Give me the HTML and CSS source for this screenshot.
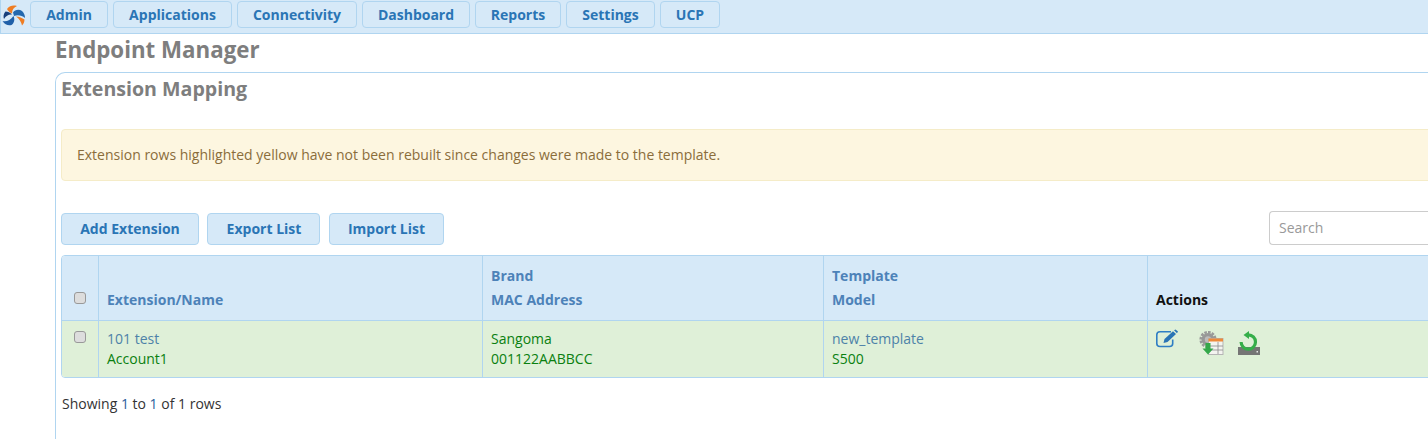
FILE: index.html
```html
<!DOCTYPE html>
<html lang="en">
<head>
<meta charset="utf-8">
<title>Endpoint Manager</title>
<link rel="stylesheet" href="styles.css">
</head>
<body>
<header class="topbar">
  <svg class="logo" viewBox="0 0 24 24" width="24" height="24" aria-hidden="true">
    <path d="M5 5 C8 1.500 11 1 15 2 C12 3.500 10 5.500 10 9.500 C8 9 6 7 5 5Z" fill="#ef7d22"/>
    <path d="M11 8.500 C13 5.500 17 5 20 7 C22 9 23 11 23 14 C20 11.500 16 10.500 12 12Z" fill="#2468ad"/>
    <path d="M14 12.500 C17.500 12.500 20 14 22.500 15.500 C22.500 18 21.500 20 20 21.500 C19.500 18 17 14.500 14 12.500Z" fill="#ef7d22"/>
    <path d="M11.500 12 C13 15 12.500 19 9.500 21 C6.500 22 3 21 .5 17 C4 18 8.500 16.500 11.500 12Z" fill="#1f5fa8"/>
    <path d="M10 10.500 C7 10 4 11.500 2 15 C1 13 1.500 9.500 3.500 7.500 C5.500 7.500 8.500 8.500 10 10.500Z" fill="#173f7c"/>
  </svg>
  <nav class="menu">
    <a class="menu-btn w-admin">Admin</a>
    <a class="menu-btn w-apps">Applications</a>
    <a class="menu-btn w-conn">Connectivity</a>
    <a class="menu-btn w-dash">Dashboard</a>
    <a class="menu-btn w-rep">Reports</a>
    <a class="menu-btn w-set">Settings</a>
    <a class="menu-btn w-ucp">UCP</a>
  </nav>
</header>
<main class="page">
  <h1 class="title">Endpoint Manager</h1>
  <section class="panel">
    <h2 class="subtitle">Extension Mapping</h2>
    <div class="alert">Extension rows highlighted yellow have not been rebuilt since changes were made to the template.</div>
    <div class="toolbar">
      <div class="tools">
        <button class="tool w-add">Add Extension</button>
        <button class="tool w-exp">Export List</button>
        <button class="tool w-imp">Import List</button>
      </div>
      <input class="search" type="text" placeholder="Search">
    </div>
    <div class="table-wrap">
      <div class="thead">
        <div class="cell c-check"><span class="check"></span></div>
        <div class="cell c-name"><span class="th">Extension/Name</span></div>
        <div class="cell c-brand"><span class="th">Brand</span><span class="th">MAC Address</span></div>
        <div class="cell c-tmpl"><span class="th">Template</span><span class="th">Model</span></div>
        <div class="cell c-act"><span class="th th-black">Actions</span></div>
      </div>
      <div class="trow">
        <div class="cell c-check"><span class="check"></span></div>
        <div class="cell c-name"><span class="link">101 test</span><span class="val">Account1</span></div>
        <div class="cell c-brand"><span class="val">Sangoma</span><span class="val">001122AABBCC</span></div>
        <div class="cell c-tmpl"><span class="link">new_template</span><span class="val">S500</span></div>
        <div class="cell c-act">
          <div class="icons">
            <svg class="ic-edit" width="23" height="20" viewBox="0 0 23 20" aria-hidden="true">
              <path d="M15 3.700H4Q.8 3.700 .8 6.700V15.500Q.8 18.500 4 18.500H13.500Q16.700 18.500 16.700 15.500V11.500" fill="none" stroke="#2f7ec4" stroke-width="1.600"/>
              <path d="M7.500 15 L8.500 11 L17 3.200 L20 6 L11.500 14Z" fill="#2a74b5"/>
              <path d="M18 2.200 L19.500 1.400 L22 3.600 L21 5.200Z" fill="#2a74b5"/>
            </svg>
            <svg class="ic-gear" width="25" height="24" viewBox="0 0 25 24" aria-hidden="true">
              <circle cx="9" cy="8.500" r="7.300" fill="none" stroke="#9a9a9a" stroke-width="2.600" stroke-dasharray="2.600 1.200"/>
              <circle cx="9" cy="8.500" r="6.500" fill="#989898"/>
              <circle cx="9" cy="8.500" r="3.200" fill="#bcbcbc"/>
              <rect x="9.500" y="7.500" width="14.500" height="16" fill="#f4f4f0" stroke="#b5b5b5"/>
              <rect x="9.500" y="7.500" width="14.500" height="3" fill="#ee8a3a"/>
              <path d="M19 11V23M10 15H24M10 19H24" stroke="#8c8c8c" stroke-width=".8"/>
              <path d="M6.500 12H11.500V17.500H14.500L9 23.500L3.500 17.500H6.500Z" fill="#34a84a"/>
            </svg>
            <svg class="ic-rebuild" width="22" height="24" viewBox="0 0 22 24" aria-hidden="true">
              <path d="M0 15H22V23H0Z" fill="#757575"/>
              <path d="M10.300 2.800A7.200 7.200 0 1 1 3.100 10" fill="none" stroke="#35ae4a" stroke-width="3.200"/>
              <path d="M11 -1 V7 L5.500 3Z" fill="#35ae4a"/>
              <rect x="18.500" y="19" width="1.500" height="1.500" fill="#e8e8e8"/>
            </svg>
          </div>
        </div>
      </div>
    </div>
    <div class="summary">Showing <span class="num">1</span> to <span class="num">1</span> of 1 rows</div>
  </section>
</main>
</body>
</html>
```

FILE: styles.css
```css
* { box-sizing: border-box; }
html, body { margin: 0; padding: 0; background: #fff; overflow: hidden; height: 439px; }
body { font-family: "Open Sans", "Liberation Sans", sans-serif; font-size: 14px; color: #333; width: 1428px; }

.topbar {
  display: flex;
  height: 34px;
  background: #d6e9f8;
  border: 1px solid #b0d5f0;
  border-width: 0 0 1px 1px;
  padding: 1px 0 0 1px;
}
.logo { margin-top: 3px; flex: none; }
.menu { display: flex; gap: 5px; margin-left: 4px; }
.menu-btn {
  display: flex;
  align-items: center;
  justify-content: center;
  height: 27px;
  border: 1px solid #b0d5f0;
  border-radius: 4px;
  background: #d6e9f8;
  color: #2a75b5;
  font-weight: 700;
  font-size: 14px;
}
.w-admin { width: 78px; }
.w-apps { width: 119px; }
.w-conn { width: 120px; }
.w-dash { width: 108px; }
.w-rep { width: 86px; }
.w-set { width: 89px; }
.w-ucp { width: 60px; }

.page { padding-left: 55px; }
.title {
  margin: 0;
  height: 38px;
  font-size: 22.3px;
  line-height: 31px;
  font-weight: 700;
  color: #7e7e7e;
}
.panel {
  width: 1500px;
  height: 400px;
  border: 1px solid #b0d5f0;
  border-right: 0;
  border-radius: 10px 0 0 0;
  padding: 0 0 0 5px;
}
.subtitle {
  margin: 0;
  height: 56px;
  font-size: 19.6px;
  line-height: 32px;
  font-weight: 700;
  color: #7e7e7e;
}
.alert {
  width: 1440px;
  height: 52px;
  padding: 0 15px 2px;
  display: flex;
  align-items: center;
  background: #fdf6e0;
  border: 1px solid #f5ecc8;
  border-radius: 4px;
  color: #8a6d3b;
  font-size: 14px;
}
.toolbar {
  display: flex;
  justify-content: space-between;
  width: 1367px;
  margin-top: 30px;
  height: 44px;
}
.tools { display: flex; gap: 8px; padding-top: 2px; }
.tool {
  height: 32px;
  padding: 0 0 2px;
  border: 1px solid #b0d5f0;
  border-radius: 4px;
  background: #d6e9f8;
  color: #2a75b5;
  font-family: inherit;
  font-size: 14px;
  font-weight: 700;
}
.w-add { width: 138px; }
.w-exp { width: 113px; padding-left: 1px; }
.w-imp { width: 115px; margin-left: 1px; }
.search {
  width: 160px;
  height: 34px;
  margin-right: -1px;
  padding: 0 9px 2px;
  border: 1px solid #ccc;
  border-radius: 4px 0 0 4px;
  border-right: 0;
  font-family: inherit;
  font-size: 14px;
  color: #555;
  outline: 0;
}
.search::placeholder { color: #999; opacity: 1; }

.table-wrap {
  width: 1440px;
  border: 1px solid #b0d5f0;
  border-radius: 4px;
  overflow: hidden;
}
.thead, .trow { display: flex; }
.thead { height: 65px; background: #d6e9f8; border-bottom: 1px solid #b0d5f0; }
.trow { height: 56px; background: #dff0d8; }
.cell {
  display: flex;
  flex-direction: column;
  padding: 0 8px;
  border-left: 1px solid #b0d5f0;
}
.cell:first-child { border-left: 0; }
.thead .cell { justify-content: flex-end; padding-bottom: 8px; }
.trow .cell { padding-top: 8px; }
.c-check { width: 36px; flex: none; align-items: center; }
.c-name { width: 384px; flex: none; }
.c-brand { width: 341px; flex: none; }
.c-tmpl { width: 324px; flex: none; }
.c-act { flex: 1; }
.th { font-size: 14px; line-height: 24px; font-weight: 700; color: #4d82b8; }
.th-black { color: #111; }
.link { font-size: 14px; line-height: 20px; color: #4d82a8; }
.val { font-size: 14px; line-height: 20px; color: #0a8010; }
.check {
  display: block;
  width: 12px;
  height: 12px;
  border: 1px solid #999;
  border-radius: 3px;
  background: #ddd;
}
.thead .check { margin-bottom: 8px; }
.trow .check { margin-top: 2px; }
.icons { display: flex; align-items: flex-start; }
.ic-edit { margin-top: -1px; margin-right: 20px; overflow: visible; }
.ic-gear { margin-top: 2px; margin-right: 14px; }
.ic-rebuild { margin-top: 3px; overflow: visible; }
.summary { margin: 16px 0 0 1px; font-size: 14px; line-height: 20px; color: #333; }
.num { color: #2a5d9c; }
```
